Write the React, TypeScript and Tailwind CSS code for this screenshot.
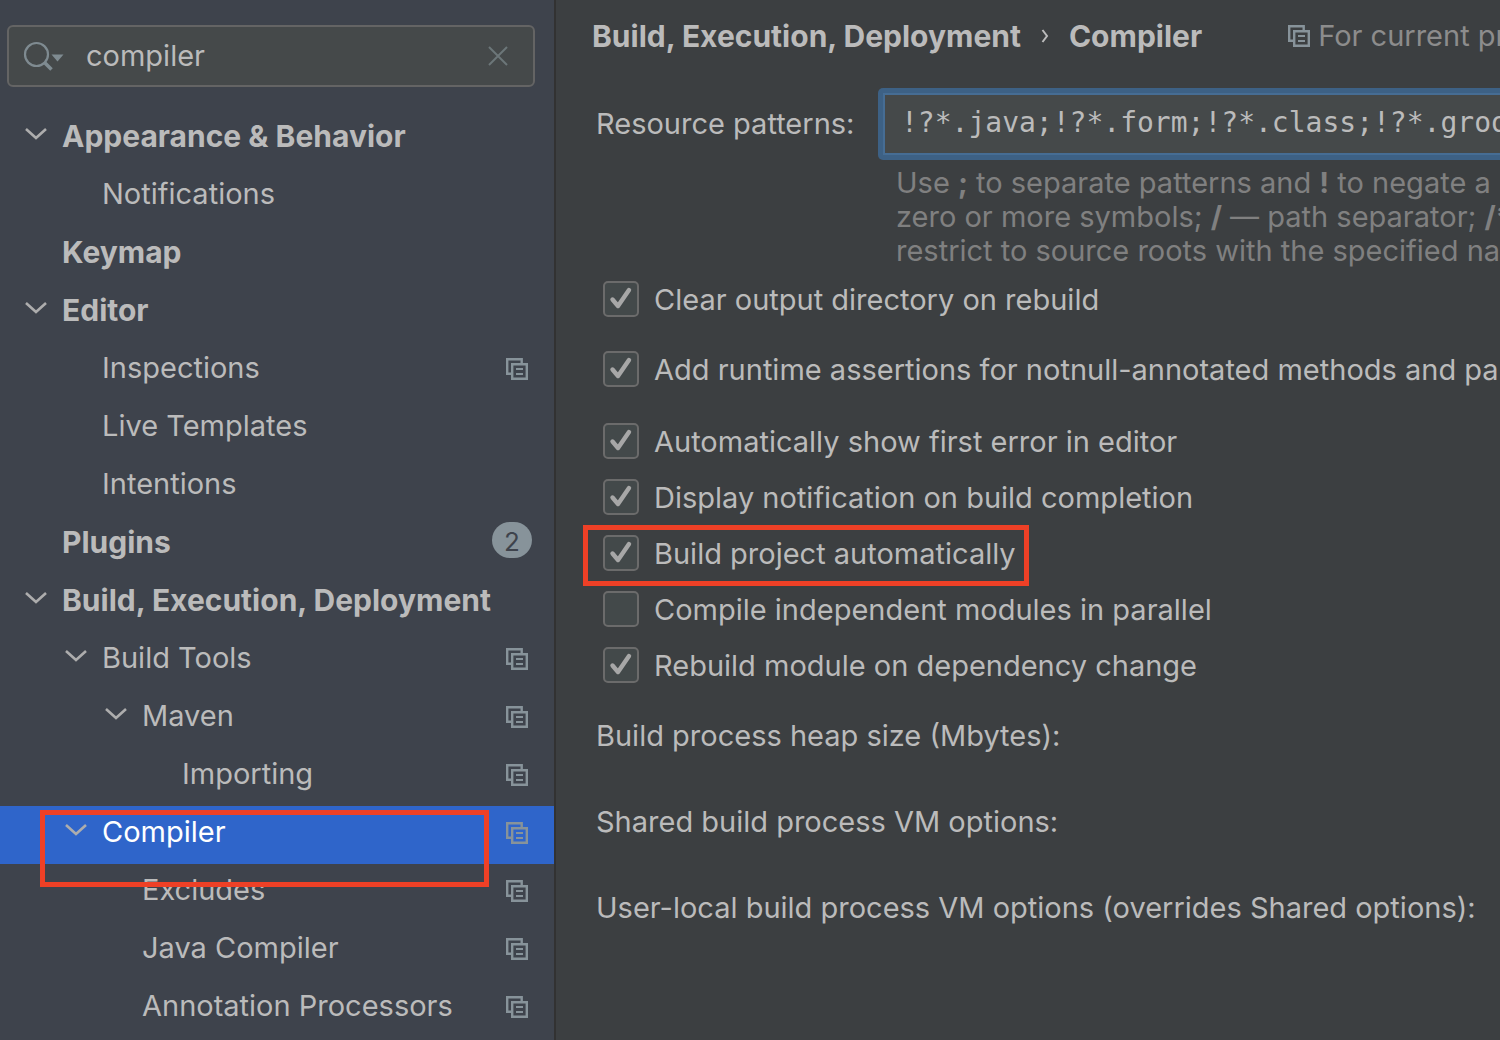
import { useState, type ReactNode } from "react";

type TreeItem = {
  label: string;
  level: 0 | 1 | 2 | 3;
  open?: boolean;
  bold?: boolean;
  project?: boolean;
  badge?: number;
  selected?: boolean;
};

const TREE: TreeItem[] = [
  { label: "Appearance & Behavior", level: 0, open: true, bold: true },
  { label: "Notifications", level: 1 },
  { label: "Keymap", level: 0, bold: true },
  { label: "Editor", level: 0, open: true, bold: true },
  { label: "Inspections", level: 1, project: true },
  { label: "Live Templates", level: 1 },
  { label: "Intentions", level: 1 },
  { label: "Plugins", level: 0, bold: true, badge: 2 },
  { label: "Build, Execution, Deployment", level: 0, open: true, bold: true },
  { label: "Build Tools", level: 1, open: true, project: true },
  { label: "Maven", level: 2, open: true, project: true },
  { label: "Importing", level: 3, project: true },
  { label: "Compiler", level: 1, open: true, project: true, selected: true },
  { label: "Excludes", level: 2, project: true },
  { label: "Java Compiler", level: 2, project: true },
  { label: "Annotation Processors", level: 2, project: true },
];

const INDENT = ["pl-6", "pl-16", "pl-26", "pl-36"];

function ProjectIcon() {
  return (
    <svg width="22" height="22" viewBox="0 0 22 22" fill="none" className="shrink-0" aria-hidden="true">
      <path d="M15.7 5V1.2H1.2v14.5H5" stroke="#87939a" strokeWidth="2.4" />
      <path d="M6.2 6.2h14.6v14.6H6.2z" stroke="#87939a" strokeWidth="2.4" />
      <path d="M10 11h7M10 16h7" stroke="#87939a" strokeWidth="2" />
    </svg>
  );
}

function Chevron() {
  return (
    <svg width="24" height="14" viewBox="0 0 24 14" fill="none" aria-hidden="true">
      <path d="M2 2l10 9 10-9" stroke="#adadad" strokeWidth="2.6" />
    </svg>
  );
}

function TreeRow({ item }: { item: TreeItem }) {
  return (
    <li className={`relative ${item.selected ? "z-10" : ""}`}>
      <button
        type="button"
        className={`flex h-[58px] w-full items-center pr-[26px] text-left ${INDENT[item.level]} ${
          item.selected ? "bg-[#2f65ca] text-white" : ""
        }`}
      >
        <span className="w-[38px] shrink-0 pb-2.5">{item.open && <Chevron />}</span>
        <span className={`grow whitespace-nowrap pb-1.5 ${item.bold ? "text-[30px] font-bold" : ""}`}>
          {item.label}
        </span>
        {item.project && (
          <span className="pb-1">
            <ProjectIcon />
          </span>
        )}
        {item.badge && (
          <span className="-mr-1 mb-2.5 flex h-9 w-10 items-center justify-center rounded-full bg-[#87939a] pt-1 text-[26px] text-[#3e434c]">
            {item.badge}
          </span>
        )}
      </button>
      {item.selected && (
        <span className="pointer-events-none absolute top-1 left-10 h-[77px] w-[449px] border-5 border-[#ee4026]" />
      )}
    </li>
  );
}

function Option({ label, initial = true, marked = false }: { label: string; initial?: boolean; marked?: boolean }) {
  const [checked, setChecked] = useState(initial);
  return (
    <label className="relative flex h-9 w-max items-center gap-[15px] whitespace-nowrap">
      <span className="relative size-9">
        <input
          type="checkbox"
          checked={checked}
          onChange={(e) => setChecked(e.target.checked)}
          className="block size-9 appearance-none rounded-[5px] border-2 border-[#6b6b6b] bg-[#43494a]"
        />
        {checked && (
          <svg className="pointer-events-none absolute inset-0" width="36" height="36" viewBox="0 0 36 36" fill="none" aria-hidden="true">
            <path d="M9.5 18.5l5.5 6.5L26 9" stroke="#a7a7a7" strokeWidth="4.4" strokeLinecap="round" strokeLinejoin="round" />
          </svg>
        )}
      </span>
      <span className="pt-0.5">{label}</span>
      {marked && (
        <span className="pointer-events-none absolute -top-2.5 -left-5 h-[61px] w-[446px] border-5 border-[#ee4026]" />
      )}
    </label>
  );
}

function B({ children }: { children: ReactNode }) {
  return <b className="font-bold">{children}</b>;
}

export default function App() {
  const [query, setQuery] = useState("compiler");
  const [patterns, setPatterns] = useState("!?*.java;!?*.form;!?*.class;!?*.groovy;!?*.scala;!?*.flex;!?*.kt");

  return (
    <div className="flex h-screen overflow-hidden bg-[#3c3f41] font-['Inter',sans-serif] text-[29px] leading-[34px] text-[#bbbbbb]">
      <aside className="w-[556px] shrink-0 overflow-hidden border-r-2 border-[#323232] bg-[#3e434c]">
        <div className="mt-[25px] mr-[19px] mb-[23px] ml-[7px] flex h-[62px] items-center rounded-[6px] border-2 border-[#646464] bg-[#45494a] pr-[25px] pl-3.5">
          <svg width="42" height="32" viewBox="0 0 42 32" fill="none" className="shrink-0" aria-hidden="true">
            <circle cx="13.5" cy="14.5" r="11.5" stroke="#7f8b91" strokeWidth="2.2" />
            <path d="M21.5 22.5l7 7" stroke="#7f8b91" strokeWidth="3.6" />
            <path d="M28.5 14.5h12l-6 7z" fill="#7f8b91" />
          </svg>
          <input
            aria-label="Search settings"
            value={query}
            onChange={(e) => setQuery(e.target.value)}
            className="ml-[21px] min-w-0 grow bg-transparent outline-none"
          />
          <button type="button" aria-label="Clear search" onClick={() => setQuery("")}>
            <svg width="20" height="20" viewBox="0 0 20 20" fill="none" aria-hidden="true">
              <path d="M1 1l18 18M19 1L1 19" stroke="#6c7679" strokeWidth="2" />
            </svg>
          </button>
        </div>
        <ul>
          {TREE.map((item) => (
            <TreeRow key={item.label} item={item} />
          ))}
        </ul>
      </aside>

      <main className="min-w-0 grow overflow-hidden pt-[19px] pl-9 whitespace-nowrap">
        <header className="flex items-center">
          <h1 className="flex items-center text-[30px] font-bold">
            Build, Execution, Deployment
            <svg width="8" height="14" viewBox="0 0 8 14" fill="none" className="mx-5" aria-hidden="true">
              <path d="M1.5 1l4.5 6-4.5 6" stroke="#bbbbbb" strokeWidth="2" />
            </svg>
            Compiler
          </h1>
          <p className="ml-[86px] flex items-center gap-2 text-[#8c8c8c]">
            <ProjectIcon />
            For current project
          </p>
        </header>

        <div className="mt-[35px] flex items-center pl-1">
          <label htmlFor="patterns" className="w-[282px] shrink-0">
            Resource patterns:
          </label>
          <div className="min-w-[800px] grow rounded-[5px] bg-[#3d6185] p-[5px]">
            <input
              id="patterns"
              value={patterns}
              onChange={(e) => setPatterns(e.target.value)}
              className="block h-[62px] w-full border-2 border-[#466d94] bg-[#45494a] px-4 pb-1 font-['DejaVu_Sans_Mono',monospace] text-[28px] outline-none"
            />
          </div>
        </div>

        <p className="mt-1.5 pl-[304px] text-[#808080]">
          Use <B>;</B> to separate patterns and <B>!</B> to negate a pattern. Accepted wildcards:
          <br />
          zero or more symbols; <B>/</B> — path separator; <B>/**/</B> — any number of directories;
          <br />
          restrict to source roots with the specified name
        </p>

        <div className="mt-[13px] flex flex-col gap-5 pl-[11px]">
          <div className="mb-4 flex flex-col gap-[34px]">
            <Option label="Clear output directory on rebuild" />
            <Option label="Add runtime assertions for notnull-annotated methods and parameters" />
          </div>
          <Option label="Automatically show first error in editor" />
          <Option label="Display notification on build completion" />
          <Option label="Build project automatically" marked />
          <Option label="Compile independent modules in parallel" initial={false} />
          <Option label="Rebuild module on dependency change" />
        </div>

        <div className="mt-9 flex flex-col gap-[52px] pl-1">
          <p>Build process heap size (Mbytes):</p>
          <p>Shared build process VM options:</p>
          <p>User-local build process VM options (overrides Shared options):</p>
        </div>
      </main>
    </div>
  );
}
